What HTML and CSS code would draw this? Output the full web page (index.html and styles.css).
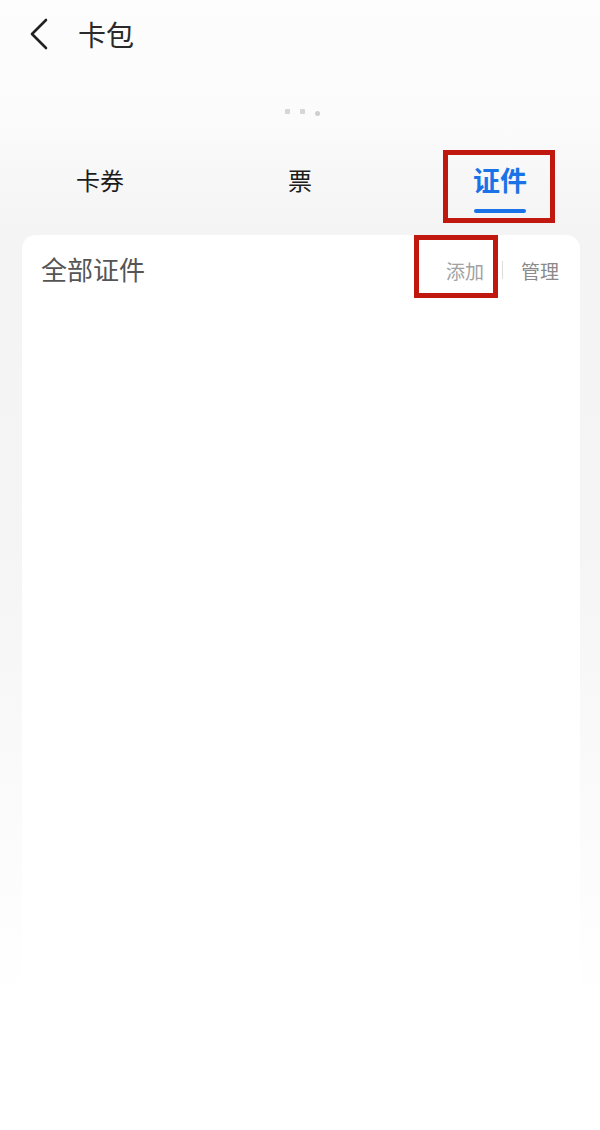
FILE: index.html
```html
<!DOCTYPE html>
<html lang="zh-CN">
<head>
<meta charset="utf-8">
<title>卡包</title>
<link rel="stylesheet" href="styles.css">
</head>
<body>
<div class="page">
  <header class="topbar">
    <svg class="back" width="20" height="32" viewBox="0 0 20 32" aria-hidden="true">
      <path d="M17 2 L3 16 L17 30" fill="none" stroke="#222" stroke-width="2.6" stroke-linecap="round" stroke-linejoin="round"/>
    </svg>
    <h1 class="title">卡包</h1>
  </header>
  <div class="dots"><span></span><span></span><span class="d3"></span></div>
  <nav class="tabs">
    <div class="tab">卡券</div>
    <div class="tab">票</div>
    <div class="tab active">证件<span class="bar"></span><span class="mark mark-tab"></span></div>
  </nav>
  <section class="card">
    <div class="card-head">
      <span class="card-title">全部证件</span>
      <div class="actions">
        <span class="act add">添加<span class="mark mark-add"></span></span>
        <span class="sep"></span>
        <span class="act">管理</span>
      </div>
    </div>
  </section>
</div>
</body>
</html>
```
FILE: styles.css
```css
html, body {
  margin: 0;
  padding: 0;
}
body {
  width: 600px;
  height: 1130px;
  overflow: hidden;
  font-family: "Noto Sans CJK SC", "Noto Sans", sans-serif;
  background: linear-gradient(#fdfdfd 0px, #fbfbfb 120px, #f4f4f4 230px, #f5f5f5 550px, #ffffff 1000px);
  color: #222;
}
.page {
  display: flex;
  flex-direction: column;
  height: 1130px;
}
.topbar {
  display: flex;
  align-items: center;
  height: 68px;
  padding-left: 29px;
  box-sizing: border-box;
}
.back {
  display: block;
  margin-top: -1px;
}
.title {
  margin: 0 0 0 29px;
  font-size: 28px;
  font-weight: 400;
  color: #2a2a2a;
  line-height: 1;
}
.dots {
  display: flex;
  justify-content: center;
  gap: 10px;
  height: 20px;
  margin-top: 41px;
  padding-left: 4px;
}
.dots span {
  width: 5px;
  height: 5px;
  background: #d6d6d6;
  border-radius: 1px;
}
.dots .d3 {
  margin-top: 2px;
  border-radius: 50%;
  background: #cfcfcf;
}
.tabs {
  display: grid;
  grid-template-columns: 200px 200px 200px;
  height: 114px;
  margin-top: -8px;
}
.tab {
  position: relative;
  display: flex;
  justify-content: center;
  padding-top: 47px;
  font-size: 24px;
  font-weight: 400;
  line-height: 1;
  color: #1c1c1c;
}
.tab.active {
  color: #1a73e6;
  font-size: 27px;
  font-weight: 700;
  padding-top: 45px;
}
.bar {
  position: absolute;
  left: 74px;
  top: 88px;
  width: 52px;
  height: 4px;
  border-radius: 2px;
  background: #1a73e6;
}
.mark {
  position: absolute;
  border: 5px solid #c0180e;
  box-sizing: border-box;
}
.mark-tab {
  left: 43px;
  top: 29px;
  width: 112px;
  height: 73px;
}
.card {
  flex: 1;
  margin: 0 20px 0 22px;
  background: #fff;
  border-radius: 14px 14px 0 0;
}
.card-head {
  display: flex;
  align-items: center;
  justify-content: space-between;
  height: 68px;
  padding: 0 21px 0 19px;
}
.card-title {
  font-size: 26px;
  color: #555;
  line-height: 1;
}
.actions {
  display: flex;
  align-items: center;
  margin-top: 2px;
}
.act {
  position: relative;
  font-size: 19px;
  color: #8a8a8a;
  line-height: 1;
}
.add {
  color: #a2a2a2;
}
.sep {
  width: 1px;
  height: 18px;
  background: #dcdcdc;
  margin: 0 18px;
}
.mark-add {
  left: -32px;
  top: -26px;
  width: 84px;
  height: 63px;
}
```
